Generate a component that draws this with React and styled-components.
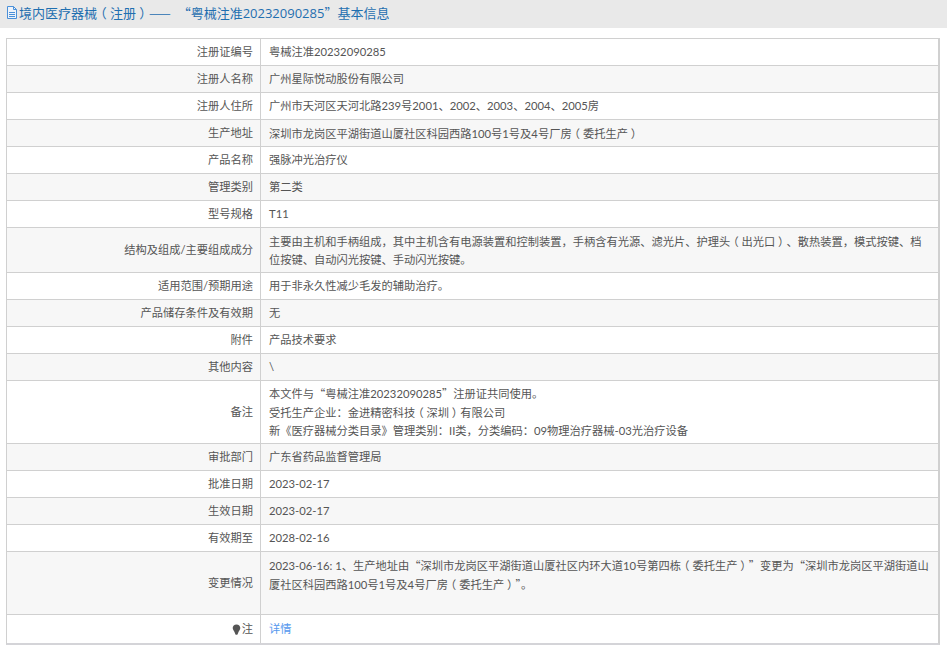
import React from "react";
import styled, { createGlobalStyle } from "styled-components";

const Global = createGlobalStyle`
  html, body { margin: 0; padding: 0; background: #fff; }
  body { font-family: "Open Sans", "Noto Sans CJK SC", sans-serif; }
`;

const Page = styled.div`
  width: 947px;
  height: 651px;
  overflow: hidden;
  display: flex;
  flex-direction: column;
`;

const TitleBar = styled.h1`
  margin: 0 0 10px;
  height: 28px;
  box-sizing: border-box;
  padding: 0 0 4px 7px;
  background: #e9e9e9;
  display: flex;
  align-items: center;
  gap: 2px;
  font-size: 13px;
  font-weight: 400;
  color: #1f6fb0;
  white-space: pre;
`;

const Sheet = styled.div`
  margin: 0 6px;
  width: 934px;
  box-sizing: border-box;
  border-top: 1px solid #d0d0d0;
  border-left: 1px solid #d0d0d0;
  border-right: 2px solid #d0d0d0;
  border-bottom: 2px solid #d4d4d8;
`;

const Row = styled.div`
  display: grid;
  grid-template-columns: 254px 1fr;
  height: ${(p) => p.$h}px;
  box-sizing: border-box;
  background: ${(p) => (p.$alt ? "#f7f7f7" : "#fff")};
  border-bottom: ${(p) => (p.$last ? "0" : "1px solid #d0d0d0")};
  font-family: "Lato", "Noto Sans CJK SC", sans-serif;
  font-size: 11.25px;
  line-height: 18px;
  color: #555;
`;

const Label = styled.div`
  display: flex;
  align-items: center;
  justify-content: flex-end;
  gap: 1px;
  padding-right: 7px;
  border-right: 1px solid #d0d0d0;
`;

const Value = styled.div`
  padding: 0 8px;
  display: flex;
  flex-direction: column;
  justify-content: ${(p) => (p.$top ? "flex-start" : "center")};
  padding-top: ${(p) => (p.$top ? "4px" : "0")};
`;

const Paren = styled.span`
  font-family: "Noto Sans CJK SC", sans-serif;
  font-feature-settings: "halt";
  padding: 0 0.25em;
`;

const Quote = styled.span`
  font-family: "Noto Sans CJK SC", sans-serif;
`;

const DetailLink = styled.a`
  color: #5599ee;
  text-decoration: none;
`;

const rows = [
  ["注册证编号", ["粤械注准20232090285"]],
  ["注册人名称", ["广州星际悦动股份有限公司"]],
  ["注册人住所", ["广州市天河区天河北路239号2001、2002、2003、2004、2005房"]],
  ["生产地址", ["深圳市龙岗区平湖街道山厦社区科园西路100号1号及4号厂房（委托生产）"]],
  ["产品名称", ["强脉冲光治疗仪"]],
  ["管理类别", ["第二类"]],
  ["型号规格", ["T11"]],
  ["结构及组成/主要组成成分", ["主要由主机和手柄组成，其中主机含有电源装置和控制装置，手柄含有光源、滤光片、护理头（出光口）、散热装置，模式按键、档", "位按键、自动闪光按键、手动闪光按键。"], 45],
  ["适用范围/预期用途", ["用于非永久性减少毛发的辅助治疗。"]],
  ["产品储存条件及有效期", ["无"]],
  ["附件", ["产品技术要求"]],
  ["其他内容", ["\\"]],
  ["备注", ["本文件与“粤械注准20232090285”注册证共同使用。", "受托生产企业：金进精密科技（深圳）有限公司", "新《医疗器械分类目录》管理类别：II类，分类编码：09物理治疗器械-03光治疗设备"], 63],
  ["审批部门", ["广东省药品监督管理局"]],
  ["批准日期", ["2023-02-17"]],
  ["生效日期", ["2023-02-17"]],
  ["有效期至", ["2028-02-16"]],
  ["变更情况", ["2023-06-16: 1、生产地址由“深圳市龙岗区平湖街道山厦社区内环大道10号第四栋（委托生产）”变更为“深圳市龙岗区平湖街道山", "厦社区科园西路100号1号及4号厂房（委托生产）”。"], 63, true],
];

const Styled = ({ text }) =>
  text.split(/([（）]|[“”—]+)/).map((part, i) => {
    if (part === "（" || part === "）") return <Paren key={i}>{part}</Paren>;
    if (/^[“”—]+$/.test(part)) return <Quote key={i}>{part}</Quote>;
    return part;
  });

const Bulb = () => (
  <svg width="9" height="11" viewBox="0 0 9 11" aria-hidden="true">
    <path d="M4.500 .5C2.200 .5.700 2.100.700 4c0 2 1.700 3 2.300 5.200.3 1 .6 1.500 1.500 1.500s1.200-.5 1.500-1.500C6.600 7 8.300 6 8.300 4 8.300 2.100 6.800.5 4.500.5z" fill="#555" />
  </svg>
);

const DocIcon = () => (
  <svg width="10" height="13" viewBox="0 0 10 13" fill="#eef3fa" stroke="#4a90d9" strokeWidth="1" aria-hidden="true">
    <path d="M.5.500h6l3 3v9h-9z" />
    <path d="M6.500.5v3h3M2 6.500h6M2 8.500h6M2 10.500h6" fill="none" />
  </svg>
);

export default function App() {
  return (
    <Page>
      <Global />
      <TitleBar>
        <DocIcon />
        <span>
          <Styled text="境内医疗器械（注册）——  “粤械注准20232090285”基本信息" />
        </span>
      </TitleBar>
      <Sheet>
        {rows.map(([label, lines, h = 27, top], i) => (
          <Row key={label} $h={h} $alt={i % 2 === 1}>
            <Label>{label}</Label>
            <Value $top={top}>
              {lines.map((l) => (
                <div key={l}>
                  <Styled text={l} />
                </div>
              ))}
            </Value>
          </Row>
        ))}
        <Row $h={28} $last>
          <Label>
            <Bulb />注
          </Label>
          <Value>
            <DetailLink href="#">详情</DetailLink>
          </Value>
        </Row>
      </Sheet>
    </Page>
  );
}
